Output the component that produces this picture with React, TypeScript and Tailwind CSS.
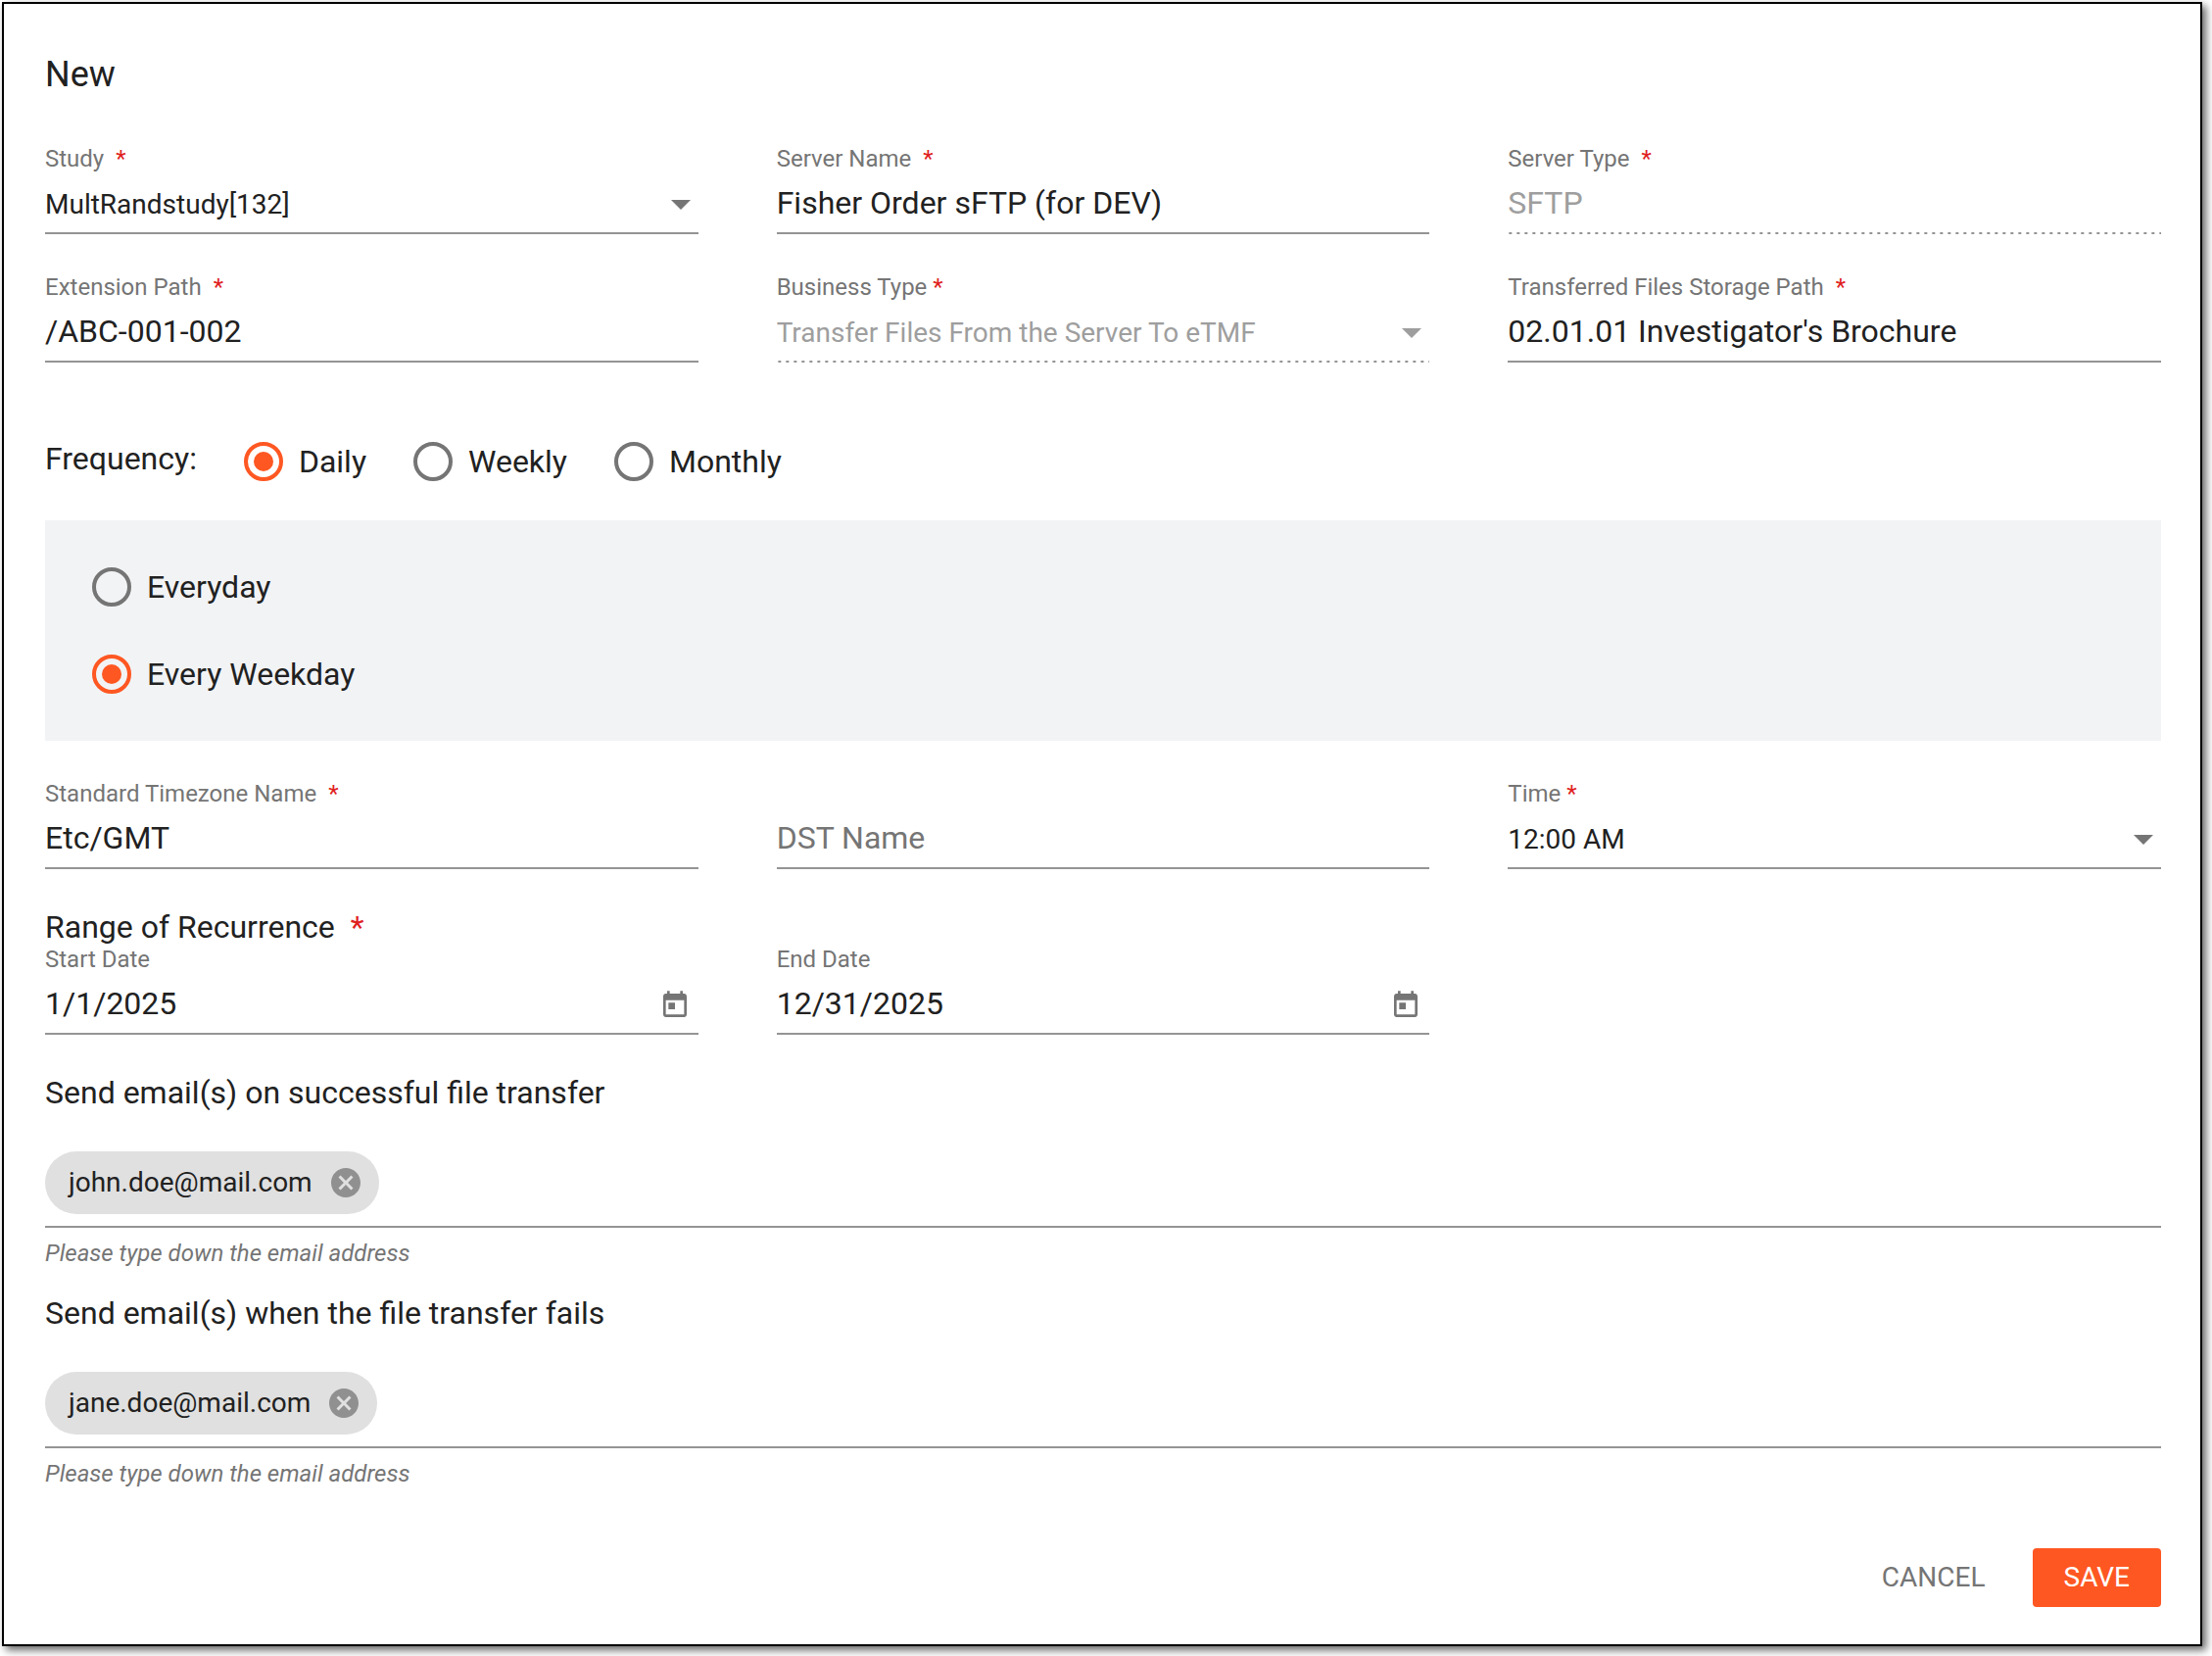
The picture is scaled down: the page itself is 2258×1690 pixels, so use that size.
import React, { useState } from 'react'

interface FieldProps {
    id: string
    label: string
    required?: boolean
    tight?: boolean
    children: React.ReactNode
}

const controlBase = 'h-[63px] w-full appearance-none rounded-none outline-none'
const enabledStyle = 'border-b-2 border-[#949494] bg-transparent text-[#212121]'
// Disabled controls get a dotted underline drawn as a repeating gradient
const disabledStyle =
    'border-b-2 border-transparent bg-[linear-gradient(to_right,#949494_33%,transparent_0)] bg-[length:8px_2px] bg-origin-border bg-bottom bg-repeat-x text-[#9e9e9e] opacity-100'

const Asterisk: React.FC<{ className: string }> = ({ className }) => (
    <span className={`text-[#e02020] ${className}`}>*</span>
)

const Field: React.FC<FieldProps> = ({ id, label, required, tight, children }) => (
    <div className="flex flex-col">
        <label htmlFor={id} className="h-7 text-[24px] leading-7 text-[#757575]">
            {label}
            {required && <Asterisk className={tight ? 'ml-1.5' : 'ml-3'} />}
        </label>
        {children}
    </div>
)

interface TextFieldProps {
    id: string
    label: string
    defaultValue: string
    required?: boolean
    disabled?: boolean
}

const TextField: React.FC<TextFieldProps> = ({ id, label, defaultValue, required, disabled }) => (
    <Field id={id} label={label} required={required}>
        <input
            id={id}
            type="text"
            defaultValue={defaultValue}
            disabled={disabled}
            className={`${controlBase} text-[32px] ${disabled ? disabledStyle : enabledStyle}`}
        />
    </Field>
)

interface SelectFieldProps {
    id: string
    label: string
    options: string[]
    tight?: boolean
    disabled?: boolean
}

const SelectField: React.FC<SelectFieldProps> = ({ id, label, options, tight, disabled }) => (
    <Field id={id} label={label} required tight={tight}>
        <div className="relative">
            <select
                id={id}
                disabled={disabled}
                className={`${controlBase} pt-1 text-[28px] ${disabled ? disabledStyle : enabledStyle}`}
            >
                {options.map((option) => (
                    <option key={option}>{option}</option>
                ))}
            </select>
            <svg
                viewBox="0 0 20 10"
                className={`pointer-events-none absolute top-7 right-2 h-[10px] w-5 ${disabled ? 'text-[#9e9e9e]' : 'text-[#757575]'}`}
                aria-hidden="true"
            >
                <path d="M0 0h20L10 10z" fill="currentColor" />
            </svg>
        </div>
    </Field>
)

const DateField: React.FC<{ id: string; label: string; defaultValue: string }> = ({ id, label, defaultValue }) => (
    <Field id={id} label={label}>
        <div className="flex h-[63px] items-center border-b-2 border-[#949494] pr-2">
            <input
                id={id}
                type="text"
                defaultValue={defaultValue}
                className="h-full min-w-0 flex-1 bg-transparent text-[32px] text-[#212121] outline-none"
            />
            <button type="button" aria-label={`Pick ${label}`} className="mt-1 text-[#757575]">
                <svg viewBox="0 0 24 24" className="h-8 w-8" fill="currentColor" aria-hidden="true">
                    <path d="M19 3h-1V1h-2v2H8V1H6v2H5c-1.11 0-1.99.9-1.99 2L3 19c0 1.1.89 2 2 2h14c1.1 0 2-.9 2-2V5c0-1.1-.9-2-2-2zm0 16H5V8h14v11zM7 10h5v5H7z" />
                </svg>
            </button>
        </div>
    </Field>
)

interface RadioOptionProps {
    name: string
    value: string
    selected: string
    onSelect: (value: string) => void
}

const RadioOption: React.FC<RadioOptionProps> = ({ name, value, selected, onSelect }) => (
    <label className="flex items-center gap-4 text-[32px] leading-10">
        <input
            type="radio"
            name={name}
            checked={selected === value}
            onChange={() => onSelect(value)}
            className="grid h-10 w-10 appearance-none place-items-center rounded-full border-4 border-[#757575] before:h-5 before:w-5 before:rounded-full checked:border-[#ff5722] checked:before:bg-[#ff5722]"
        />
        {value}
    </label>
)

const EmailList: React.FC<{ id: string; title: string; initial: string[] }> = ({ id, title, initial }) => {
    const [emails, setEmails] = useState<string[]>(initial)
    const [draft, setDraft] = useState('')

    const handleKeyDown = (e: React.KeyboardEvent<HTMLInputElement>) => {
        if (e.key !== 'Enter') return
        e.preventDefault()
        if (draft.trim()) {
            setEmails([...emails, draft.trim()])
            setDraft('')
        }
    }

    return (
        <section>
            <label htmlFor={id} className="block text-[32px] leading-[38px]">{title}</label>
            <div className="mt-[41px] flex flex-wrap items-center gap-4 border-b-2 border-[#949494] pb-3">
                {emails.map((email) => (
                    <span key={email} className="flex h-16 items-center gap-4 rounded-full bg-[#e0e0e0] pr-4 pl-6 text-[28px]">
                        {email}
                        <button
                            type="button"
                            aria-label={`Remove ${email}`}
                            onClick={() => setEmails(emails.filter((item) => item !== email))}
                            className="text-[#909090]"
                        >
                            <svg viewBox="0 0 24 24" className="h-9 w-9" fill="currentColor" aria-hidden="true">
                                <path d="M12 2C6.47 2 2 6.47 2 12s4.47 10 10 10 10-4.47 10-10S17.53 2 12 2zm5 13.59L15.59 17 12 13.41 8.41 17 7 15.59 10.59 12 7 8.41 8.41 7 12 10.59 15.59 7 17 8.41 13.41 12 17 15.59z" />
                            </svg>
                        </button>
                    </span>
                ))}
                <input
                    id={id}
                    type="text"
                    value={draft}
                    onChange={(e) => setDraft(e.target.value)}
                    onKeyDown={handleKeyDown}
                    className="h-16 min-w-0 flex-1 bg-transparent text-[28px] outline-none"
                />
            </div>
            <p className="mt-3 text-[24px] leading-7 text-[#757575] italic">Please type down the email address</p>
        </section>
    )
}

const App: React.FC = () => {
    const [frequency, setFrequency] = useState('Daily')
    const [dayMode, setDayMode] = useState('Every Weekday')

    return (
        <div className="bg-white pt-[2px] pr-[10px] pb-[10px] pl-[2px] font-['Roboto',sans-serif] text-[#212121]">
            <form
                onSubmit={(e) => e.preventDefault()}
                className="border-2 border-black bg-white pt-[52px] pr-10 pb-[38px] pl-[42px] shadow-[4px_4px_8px_rgba(0,0,0,0.6)]"
            >
                <h1 className="text-[36px] leading-10">New</h1>

                <div className="mt-[52px] grid grid-cols-3 gap-x-20 gap-y-10">
                    <SelectField id="study" label="Study" options={['MultRandstudy[132]']} />
                    <TextField id="server-name" label="Server Name" defaultValue="Fisher Order sFTP (for DEV)" required />
                    <TextField id="server-type" label="Server Type" defaultValue="SFTP" required disabled />
                    <TextField id="extension-path" label="Extension Path" defaultValue="/ABC-001-002" required />
                    <SelectField
                        id="business-type"
                        label="Business Type"
                        options={['Transfer Files From the Server To eTMF']}
                        tight
                        disabled
                    />
                    <TextField
                        id="storage-path"
                        label="Transferred Files Storage Path"
                        defaultValue="02.01.01 Investigator's Brochure"
                        required
                    />
                </div>

                {/* Schedule */}
                <div role="radiogroup" aria-labelledby="frequency-label" className="mt-[81px] flex items-start gap-12">
                    <span id="frequency-label" className="text-[32px] leading-[34px]">Frequency:</span>
                    {['Daily', 'Weekly', 'Monthly'].map((value) => (
                        <RadioOption key={value} name="frequency" value={value} selected={frequency} onSelect={setFrequency} />
                    ))}
                </div>
                <div className="mt-10 flex flex-col items-start gap-[49px] bg-[#f2f3f5] p-12">
                    {['Everyday', 'Every Weekday'].map((value) => (
                        <RadioOption key={value} name="day-mode" value={value} selected={dayMode} onSelect={setDayMode} />
                    ))}
                </div>

                <div className="mt-10 grid grid-cols-3 gap-x-20">
                    <TextField id="timezone" label="Standard Timezone Name" defaultValue="Etc/GMT" required />
                    <div className="flex flex-col justify-end">
                        <input
                            type="text"
                            aria-label="DST Name"
                            placeholder="DST Name"
                            className={`${controlBase} text-[32px] placeholder:text-[#757575] ${enabledStyle}`}
                        />
                    </div>
                    <SelectField id="time" label="Time" options={['12:00 AM']} tight />
                </div>

                <h2 className="mt-10 text-[32px] leading-[38px]">
                    Range of Recurrence
                    <Asterisk className="ml-4" />
                </h2>
                <div className="grid grid-cols-3 gap-x-20">
                    <DateField id="start-date" label="Start Date" defaultValue="1/1/2025" />
                    <DateField id="end-date" label="End Date" defaultValue="12/31/2025" />
                </div>

                {/* Notifications */}
                <div className="mt-10 flex flex-col gap-7">
                    <EmailList id="success-emails" title="Send email(s) on successful file transfer" initial={['john.doe@mail.com']} />
                    <EmailList id="failure-emails" title="Send email(s) when the file transfer fails" initial={['jane.doe@mail.com']} />
                </div>

                <div className="mt-[62px] flex items-center justify-end gap-4 text-[28px]">
                    <button type="button" className="h-[60px] px-8 text-[#757575]">CANCEL</button>
                    <button type="submit" className="h-[60px] rounded-sm bg-[#ff5722] px-8 text-white">SAVE</button>
                </div>
            </form>
        </div>
    )
}

export default App
